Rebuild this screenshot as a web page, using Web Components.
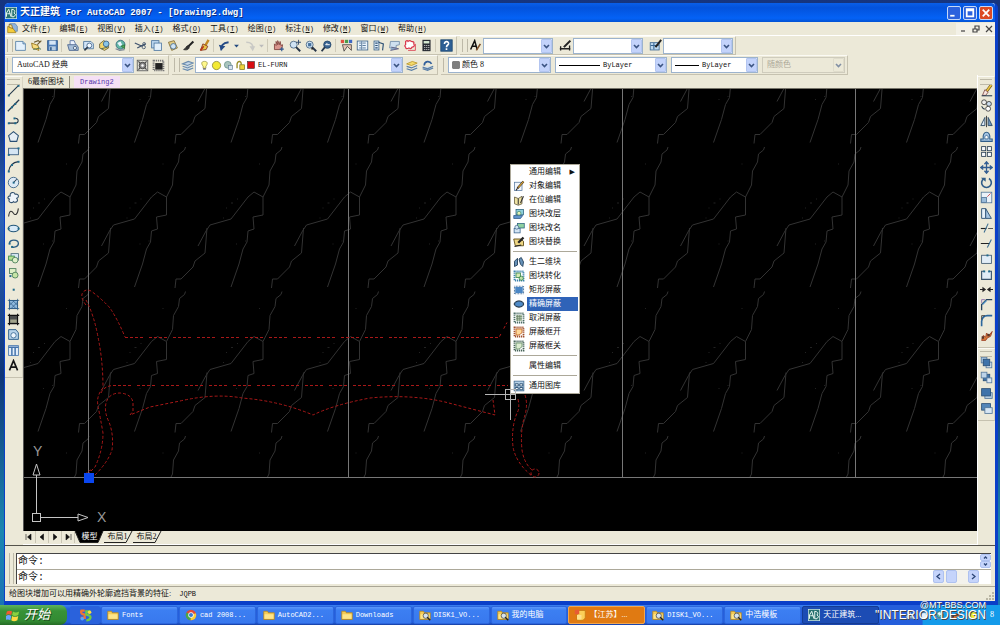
<!DOCTYPE html>
<html lang="zh-CN">
<head>
<meta charset="utf-8">
<title>天正建筑 For AutoCAD 2007</title>
<style>
html,body{margin:0;height:100%}
body{overflow:hidden;background:#0b43b0;font-family:"Liberation Serif","Noto Sans CJK SC",sans-serif;font-size:8px;line-height:12px;color:#111}
</style>
</head>
<body>
<cad-desktop></cad-desktop>
<script>
const BASE = `
*{box-sizing:border-box}
button,select,input{font:inherit;color:inherit;margin:0;padding:0;border:0;background:none;border-radius:0;outline:0}
svg{display:block}
.m{font-family:"Liberation Mono","Noto Sans CJK SC",monospace;font-size:7px}
`;
class Part extends HTMLElement {
  constructor() {
    super();
    const root = this.attachShadow({mode: 'open'});
    root.innerHTML = `<style>${BASE}${this.css()}</style>${this.html()}`;
  }
  css() { return ':host{display:block}'; }
  html() { return '<slot></slot>'; }
}

/* Icon artwork on a 16 x 16 grid */
const R = (x, y, w, h, f, s = 'none') => `<rect x="${x}" y="${y}" width="${w}" height="${h}" fill="${f}" stroke="${s}"/>`;
const P = (d, s = '#24384c', w = 1.3, f = 'none') => `<path d="${d}" stroke="${s}" stroke-width="${w}" fill="${f}"/>`;
const C = (x, y, r, f, s = 'none') => `<circle cx="${x}" cy="${y}" r="${r}" fill="${f}" stroke="${s}"/>`;
const dots = pts => pts.map(([x, y]) => R(x - 1, y - 1, 2.4, 2.4, '#1f6a8c')).join('');
const pencil = P('M14 2L6 11', '#3a2c20', 2.6) + P('M14 2L7 10', '#f0b83c', 1.4) + P('M6 11l-2 3', '#222', 1.5);
const lens = C(7, 7, 4.3, '#cfe3f4', '#42607e') + P('M10 10l5 5', '#27364a', 2.4);
const frameDots = c => `<rect x="2" y="2" width="12" height="12" fill="none" stroke="${c}" stroke-width="2.4" stroke-dasharray="1.6 1"/>`;
const folder = P('M1 3h5l1 2h8v9H1z', '#b58419', 1, '#f5cc55') + P('M2 7h12v6H2z', 'none', 0, '#fde58a');
const ICONS = {
  file: P('M2 3h9l3 3v8H2z', '#4f7ba3', 1, '#e4f1fc') + P('M11 3v3h3', '#4f7ba3', 1, '#b5d0ea'),
  open: P('M2 5l8 3 1 6-8-3z', '#8c6a14', 1, '#f8dd7d') + P('M9 7l5-5M5 4l5-2 3 2', '#6d5a2e', 1.4) + P('M4 13l8-2 1 2', '#3c6b46', 1),
  save: R(2, 2, 12, 12, '#4b7bb5', '#305a8b') + R(4, 2, 8, 5, '#d5e6f6') + R(4, 9, 8, 5, '#b5cce2') + R(5, 10, 2, 4, '#37618f'),
  print: P('M5 7V2h5l2 5', '#536fa0', 1, '#eef4ff') + P('M2 7h11l2 3v4H4z', '#445f8a', 1, '#a8bfd9') + C(11, 11, 2, '#e8eef6', '#3d5777'),
  preview: P('M2 3h9l3 3v6H2z', '#456f96', 1, '#d2e5f8') + C(9, 8, 3, '#f4fbff', '#3b5d82') + P('M7 10l-4 4', '#2d3a4a', 2),
  publish: P('M2 6l5-4 6 3v6l-5 3-6-3z', '#5f5a37', 1, '#f5d66a') + C(10, 6, 3.5, '#8ac5e7', '#376085') + P('M4 12l8-2', '#355', 1),
  web: C(8, 7, 5.5, '#62b6a4', '#31667d') + P('M4 5l4-2 2 4-3 2z', 'none', 0, '#eaf6ff') + P('M9 9l4-2v5z', '#2f6d38', 1, '#4bb055') + P('M2 12l5 2 6-1', '#7b8795', 1.5),
  cut: P('M1 5l9 4M4 11l10-5', '#40546e', 1.5) + C(12, 10, 2, 'none', '#40546e') + C(12.5, 6, 1.7, 'none', '#40546e'),
  copy: R(2, 2, 9, 9, '#bcd6ef', '#4a75a0') + R(5, 5, 9, 9, '#e3f0fb', '#4a75a0'),
  paste: P('M3 4l7-2 4 9-7 3z', '#806a32', 1, '#e4cd84') + C(9, 9, 3.4, '#cfe4f5', '#41698f'),
  match: P('M14 3L8 9', '#222', 2.4) + P('M8 8c-3 0-3 4-6 5 4 1 7 0 7-4', '#222', 1, '#333'),
  brush: P('M13 1L9 8', '#c48a22', 3) + P('M6 6l6 3-2 4-7 1z', '#7b2b1c', 1, '#e9c645') + P('M3 14l4-5', '#b8361e', 2),
  undo: P('M4 14c-1-6 2-9 9-10', '#244a86', 2.2) + P('M1 7l3 7 5-5z', 'none', 0, '#244a86'),
  redo: P('M12 12c1-5-2-8-8-8', '#c9c9c5', 2) + P('M8 9l4 6 3-6z', 'none', 0, '#c9c9c5'),
  down: P('M5 7h6l-3 3.5z', 'none', 0, '#234a7f'),
  downoff: P('M5 7h6l-3 3.5z', 'none', 0, '#bbb'),
  pan: P('M3 13V6l2 2V3l2 4V2l2 5 1-4 1 5 2-1-1 6z', '#7b3b36', 1, '#d9958d') + P('M12 10v5M9.500 12.500h5', '#315c93', 1.4),
  zoomrt: lens + P('M13 1v6M10 4h6', '#334e70', 1.2), zoomwin: lens + R(5, 5, 4, 4, '#47719d') + R(9, 11, 2, 2, '#222'),
  zoomprev: C(9, 7, 4.5, '#3a6491', '#24466b') + P('M6 10l-4 5', '#27364a', 2.2) + P('M7 7h5M7 7l2-2', '#fff', 1.2),
  props: R(1, 1, 4, 4, '#e15142') + R(6, 1, 4, 4, '#4c9b48') + R(11, 1, 4, 4, '#3e67c4') + P('M3 7h11v7l-5-5-4 6z', '#444', 1, '#e7c6b6'),
  dc: R(1.5, 2.5, 13, 11, '#eaf4fd', '#3d6288') + '<path d="M4 5h2M8 5h4M4 8h2M8 8h4M4 11h2M8 11h4M7 3v10" stroke="#3d6288"/>',
  palette: R(2.5, 2.5, 6, 11, '#dcebf8', '#3d6288') + P('M8 4l6 2-1 8M4 5h3M4 8h3M4 11h3', '#2f5276', 1.4),
  sheet: P('M3 3h11v4l-4 1v3H2z', '#6b87a5', 1, '#cfe0ef') + P('M4 10l9 2-10 2', '#668', 1.2, '#8aa9c8'),
  markup: P('M2 3q2-2 3 0 2-2 4 0 4 0 3 3 2 3-2 4-2 3-4 1-4 2-4-1-2-2 0-3z', '#d9364a', 1.5, '#fff') + P('M5 14h9V6', '#d9364a', 1),
  calc: R(3, 1, 10, 14, '#282c33') + R(4.5, 2.5, 7, 3, '#d7ebd3') + '<path d="M5 8h7M5 10.500h7M5 13h7" stroke="#ddd" stroke-dasharray="1.500 1"/>',
  help: R(1, 1, 14, 14, '#2d5f94', '#1b456f') + '<path d="M5.500 6c0-4 5.500-3.500 5 0-.3 1.500-2.500 1.500-2.500 4M8 11.500v2" stroke="#fff" stroke-width="2" fill="none"/>',
  textstyle: P('M2 13L7 2l3 11M4 9h5', '#111', 1.8) + P('M14 6l-5 8', '#80532e', 2),
  dimstyle: P('M1 12h13M2 9v5M13 8v6', '#222', 1.6) + P('M14 2L6 10', '#222', 2.6),
  tablestyle: R(1.5, 4.5, 11, 9, '#bdd8f0', '#386692') + P('M2 8h10M6 5v8', '#386692') + P('M15 1L8 10', '#222', 2.4),
  gear: R(1.5, 1.5, 13, 13, '#dcdcd4', '#555') + C(8, 8, 4, '#888', '#333') + C(8, 8, 1.5, '#fff') + P('M3 3l2 2M13 3l-2 2M3 13l2-2M13 13l-2-2', '#444'),
  wsave: frameDots('#777') + R(4, 5, 9, 8, '#222'),
  layers: P('M2 6l7-3 6 2-7 3zM2 9l6 2 7-3M2 12l6 2 7-3', '#6b8cae', 1.4, '#c6d9eb'),
  layprev: P('M2 6l7-3 6 2-7 3z', '#b89328', 1, '#f4da6a') + P('M2 9l6 2 7-3M2 12l6 2 7-3', '#5a7ea5', 1.5),
  layst: P('M4 8c0-6 7-6 9-2', '#315f9b', 2) + P('M2 10l6 2 7-3M2 12l6 2 7-3', '#5a7ea5', 1.5, '#c6d9eb'),
  bulb: P('M8 2c6 0 4 5 2 7v3H6V9C4 7 2 2 8 2z', '#8c8a35', 1, '#fff88c') + R(6, 12, 4, 2, '#667'),
  sun: C(8, 8, 6, '#f3e934', '#77772c'),
  snow: C(7, 7, 5, '#a9c4bd', '#5c8780') + R(8, 8, 6, 6, '#d4e2f0', '#65829c'),
  lock: R(7, 7, 7, 7, '#efd43c', '#7b731b') + P('M9 7c1-7-7-6-6 1v4', '#9b902a', 2),
  red: R(1, 1, 14, 14, '#d80d12', '#222'), gray: R(1.5, 1.5, 13, 13, '#7e7e7e', '#222'),
  line: P('M2 14L14 2') + dots([[2, 14], [14, 2]]), xline: P('M1 15L15 1', '#24384c', 1.6) + dots([[6, 10], [10, 6]]),
  pline: P('M2 10h8c5 0 5-6 0-6') + dots([[2, 10], [10, 10], [9, 4]]),
  polygon: P('M8 2l6 5-2 7H4L2 7z', '#294f74', 1.3, '#e6eef5'), rect: R(2, 4, 12, 8, '#d5e5f3', '#294f74') + dots([[2, 12], [14, 4]]),
  arc: P('M2 14C3 7 7 3 14 2') + dots([[2, 14], [6, 6], [14, 2]]),
  circle: C(8, 8, 6.4, '#dce9f5', '#2e587e') + P('M8 8l4-4') + dots([[8, 8]]),
  cloud: P('M4 6c-1-5 5-5 6-2 5-1 5 4 2 5 3 4-2 6-4 4-3 3-7 0-5-3-3-1-2-4 1-4z', '#31506e', 1.3, '#eef4fa'),
  spline: P('M2 13C3 4 6 6 8 9s5 2 6-6', '#333', 1.3), ellipse: '<ellipse cx="8" cy="8" rx="6.500" ry="4" fill="#d8eaf8" stroke="#215578" stroke-width="1.400"/>' + dots([[2, 8], [14, 8]]),
  earc: P('M3 8c0-6 11-5 11 0s-7 5-8 4', '#2b5c83', 1.6) + dots([[3, 8], [6, 12]]),
  insert: R(5, 2, 9, 8, '#d8e8f5', '#467') + R(2, 5, 7, 5, '#b6df93', '#384') + C(10, 10, 3.5, '#dff0c7', '#475'), block: R(3, 2, 8, 6, '#dff0c7', '#475') + C(10, 10, 3.6, '#c7e5a6', '#475') + dots([[4, 11]]),
  point: R(7, 7, 2.500, 2.500, '#1f6a8c'),
  hatch: R(3, 3, 10, 10, '#8fb9dd', '#2c5c87') + P('M1 3h14M1 13h14M3 1v14M13 1v14M3 9l6-6M5 13l8-8M3 5l8 8M7 3l6 6', '#2c5c87', .9),
  grad: R(3, 3, 10, 10, '#4b4d4d', '#111') + P('M1 3h14M1 13h14M3 1v14M13 1v14', '#111', 1.4) + P('M4 8h8v4H4z', 'none', 0, '#a2a48b'),
  region: P('M2 2h9l3 4v8H2z', '#34648f', 1.2, '#b7d3ea') + C(8, 9, 3.3, '#eef6fd', '#34648f'),
  table: R(2, 2, 12, 12, '#e4effa', '#4373ab') + P('M2 4h12M6 3v11M10 3v11', '#4373ab', 1.8), text: P('M3 14L8 2l5 12M5 10h6', '#151515', 2),
  erase: P('M14 1L8 9', '#6d5413', 3.4) + P('M14 1L8 9', '#ecc645', 2) + P('M6 7l4 3-3 4H3z', '#744', 1, '#f6e4dc') + P('M2 14.500h13'),
  copy2: C(5, 4, 3, '#eee', '#333') + C(11, 6, 3, '#cde', '#333') + C(10, 12, 3, '#fff', '#333') + P('M2 9q2 4 4 3'),
  mirror: P('M6 3L1 13h5z', '#37536d', 1.2, '#dfe9f2') + P('M10 3l5 10h-5z', '#37536d', 1.2, '#7097be') + P('M8 1v14', '#222', 1),
  offset: P('M1 14h14v-3h-3c2-11-10-11-8 0H1z', '#315d88', 1.300, '#a7c7e5') + P('M6 11c-1-6 5-6 4 0z', '#315d88', 1, '#fff'),
  array: [[2, 2], [9, 2], [2, 9], [9, 9]].map(([x, y]) => R(x, y, 5, 5, '#f6f8fa', '#22384d')).join(''),
  move: P('M8 1v14M1 8h14M5.500 4L8 1l2.500 3M5.500 12L8 15l2.500-3M4 5.500L1 8l3 2.500M12 5.500L15 8l-3 2.500', '#315d92', 1.6),
  rotate: P('M5 3a6 6 0 1 0 6 0', '#315d88', 2) + P('M1 2h6v5z', 'none', 0, '#315d88'),
  scale: R(1.500, 1.500, 13, 13, '#eaf2f9', '#527698') + R(2, 8, 6, 6, '#9cbddb', '#527698') + P('M9 7l4-4', '#c33', 1),
  stretch: P('M2 2h5v12H2z', '#36597b', 1.200, '#e9f2fa') + P('M7 2l7 12H7z', '#36597b', 1.2, '#a7c6e3'),
  trim: P('M1 8h7', '#222', 1.4) + P('M10 8h6', '#555', 1.2) + P('M5 13L10 2', '#36698e', 1.300), extend: P('M1 8h11', '#222', 1.3) + P('M9 13l5-10', '#36698e', 1.300),
  brk1: R(2, 4, 12, 10, '#e1edf7', '#39536c') + dots([[9, 4]]), brk2: P('M5 4H2v10h12V4h-3', '#39536c', 1.400, '#e1edf7') + dots([[5, 4], [11, 4]]),
  join: P('M0 8h6M10 8h6', '#222', 1.5) + P('M3 4.500L7.500 8 3 11.500zM13 4.500L8.500 8l4.500 3.500z', 'none', 0, '#222'), chamfer: P('M2 15V8l6-6h7', '#26435d', 1.6) + P('M2 6V2h4', '#86a', 1) + P('M3 8l5-5', '#4a8cc0', 1.6),
  fillet: P('M2 15V9Q3 2 9 2h6', '#2d679d', 2) + P('M2 7V2h4', '#333', 1),
  explode: P('M2 14l2-6 3 2 1-5 3 3 4-5-2 6-4 2-2 3z', '#96381c', 1, '#d97b3c') + R(2, 9, 3, 3, '#5a3528') + R(9, 6, 3, 3, '#5a3528'),
  front: R(1.5, 1.5, 7, 7, '#a9c6e1', '#55789b') + R(7.5, 7.5, 7, 7, '#dbe8f4', '#55789b') + R(4, 4, 8, 8, '#3e73aa', '#284d74'),
  back: R(4, 4, 8, 8, '#3e73aa', '#284d74') + R(1.5, 1.5, 7, 7, '#bcd3e8', '#55789b') + R(8.5, 8.5, 6, 6, '#dbe8f4', '#55789b'),
  above: R(6, 7, 9, 7, '#b8d0e6', '#4f7396') + R(2, 2, 11, 9, '#3e73aa', '#284d74'),
  under: R(2, 2, 11, 8, '#5386b8', '#284d74') + R(6, 7, 9, 7, '#d7e6f3', '#4f7396'),
  objedit: R(2, 3, 10, 11, '#f2f6fb', '#5678a0') + pencil, refedit: P('M2 4l5 2 5-3v10l-5 2-5-2z', '#5a5235', 1, '#efe3a3') + P('M7 6v8M14 3l-4 9', '#333', 1.4),
  blklayer: R(4, 2, 10, 7, '#8fd0db', '#27607c') + P('M1 10h12l-3 4H1z', '#2b5888', 1, '#5e93cc') + C(8, 7, 2.6, '#e4f2b4', '#487'),
  blkname: R(6, 2, 9, 6, '#8fd0a0', '#27607c') + R(1.5, 8.5, 8, 6, '#d5e6f5', '#34618c') + C(5, 7, 2.6, '#cfe7f5', '#468'),
  blkswap: P('M1 4h9l4 3v6H3z', '#604f1a', 1.2, '#efd784') + P('M14 2L7 9', '#222', 3) + P('M2 14l9-2', '#222', 1.6),
  to2d: P('M2 7l4-4v9l-4 2zM8 4l3-2 3 6-1 6-3-3z', '#24405a', 1.2, '#6792b9'), convert: frameDots('#3d83ad') + R(4, 4, 6, 6, '#d4eab4', '#2a7c42') + C(11, 11, 2.8, '#bfe0a8', '#2a7c42'),
  maskrect: R(3, 4, 10, 8, '#4b87c5') + '<rect x="2" y="3" width="12" height="10" fill="none" stroke="#2d5d8c" stroke-width="1.500" stroke-dasharray="1 1"/>',
  maskell: '<ellipse cx="8" cy="8" rx="6" ry="4" fill="#4f8bc8" stroke="#1b3650" stroke-width="1.300"/>' + '<path d="M1 8l7-5 7 5-7 5z" fill="none" stroke="#333" stroke-dasharray="1 1"/>',
  unmask: frameDots('#4d6e67') + R(4, 4, 8, 8, '#b3c8aa') + P('M4 6h8M4 9h8M6 4v8M9 4v8', '#647b65', .8), frameon: frameDots('#a0502d') + P('M4 4h8v5l-4 3H4z', '#c46b2b', 1.2, '#ffd99a'),
  frameoff: frameDots('#49665a') + P('M4 4h8v5l-4 3H4z', '#6f9770', 1.200, '#dcecd0'), lib: R(1.500, 1.500, 13, 13, '#b4d0e7', '#3d668c') + P('M3 5h4v3H3zM9 5h4v3H9zM3 10h4v3H3zM9 10h4v3H9z', '#274c70', 1.200, '#f3f8fc'),
  none: '', folder, search: folder + C(9, 9, 3.500, '#d6e3ee', '#444') + P('M11 11l4 4', '#222', 2),
  chrome: C(8, 8, 7, '#e14a38') + P('M8 8L2 4.500A7 7 0 0 0 7.500 15z', 'none', 0, '#43a850') + P('M8 8l-.5 7A7 7 0 0 0 14.500 5.500z', 'none', 0, '#f6cf3a') + C(8, 8, 3.600, '#fff') + C(8, 8, 2.700, '#3b79d2'),
  doc: P('M6 2h9v10l-3 3H4V8z', '#c07a12', 1, '#fbcf57') + R(1, 1, 6, 6, '#e75c34') + P('M4 8h6v6H4z', 'none', 0, '#ffe08a'),
  acad: R(.5, .5, 15, 15, '#27716f', '#cce7df') + P('M2 13V8l3-5 3 10M3 9h4M9 13V3q6 1 3 5 4 2 0 5z', '#eefaf5', 1.3),
  flag: P('M1 4q3-2 6 0L6 8Q3 6 0 8z', 'none', 0, '#f05a32') + P('M8 4q3 2 7 0l-1 4q-4 2-7 0z', 'none', 0, '#8ad13f') + P('M0 9q3-2 6 0l-1 5q-3-2-6 0z', 'none', 0, '#68a4ff') + P('M7 9q3 2 7 0l-1 5q-4 2-7 0z', 'none', 0, '#ffd940'),
  msn: P('M7 2H3q-2 4 4 5v4H2', '#f07336', 2.8) + P('M14 3H9v4q6 1 5 4-1 3-5 3', '#71c943', 2.8) + C(4, 12, 2.200, '#57a4ff') + C(13, 4, 2.200, '#ffda3e'),
  mdoc: P('M4 1h8l3 4v7H4z', '#4f7ba3', 1, '#8fb5de') + P('M1 5l7 2 5 7H1z', '#9b7917', 1, '#f4cc3a') + P('M3 2l4 1 1 5-5-2z', '#7c5b14', 1, '#fae48d')
};
const icon = (n, s = 13) => `<svg width="${s}" height="${s}" viewBox="0 0 16 16" aria-hidden="true">${ICONS[n]}</svg>`;

customElements.define('tool-button', class extends Part {
  css() { return ':host{display:flex;width:16px;min-height:12px}:host([narrow]){width:9px}button{display:flex;flex:1;align-items:center;justify-content:center;overflow:hidden}svg{flex:none}'; }
  html() { const n = this.getAttribute('icon'); return `<button type="button" aria-label="${n}">${icon(n)}</button>`; }
});
const tools = (s) => s.split(' ').map(n => n === '|' ? '<i></i>' : `<tool-button icon="${n}"${n.startsWith('down') ? ' narrow' : ''}></tool-button>`).join('');

customElements.define('cad-toolbar', class extends Part {
  css() { return `:host{display:flex;align-items:center;padding:0 2px 0 7px;position:relative;border-right:1px solid #c6c2b0;border-bottom:1px solid #c6c2b0;border-top:1px solid #fbfaf4;background:#ece9d8}
  :host::before{content:"";position:absolute;left:2px;top:2px;bottom:2px;width:4px;border-left:1px solid #bdb9a8;border-right:1px solid #bdb9a8}
  :host([vertical]){flex-direction:column;align-items:stretch;border-right:1px solid #d8d4c2;padding:6px 0 4px}
  :host([vertical])::before{left:2px;right:2px;top:2px;bottom:auto;width:auto;height:4px;border:0;border-top:1px solid #bdb9a8;border-bottom:1px solid #bdb9a8}
  ::slotted(i){width:1px;height:13px;background:#cfcbb9;margin:0 2px 0 1px}`; }
});

customElements.define('cad-combo', class extends Part {
  css() { return `:host{display:flex;position:relative;height:16px;width:var(--w,70px);margin-right:4px}
  select{appearance:none;width:100%;padding:0 13px 0 4px;border:1px solid #9cb3cd;background:#fff;font-size:8px;line-height:14px}
  .arrow{position:absolute;right:1px;top:1px;bottom:1px;width:11px;background:#c3d3fb;border:1px solid #b3c5f0;border-radius:1px;pointer-events:none}
  .arrow svg{width:100%;height:100%}
  .lead{position:absolute;left:4px;top:0;bottom:0;display:flex;align-items:center;gap:1px;pointer-events:none}
  .lead b{height:1px;background:#000;width:var(--rule,0)}
  select.m{font-size:7px}
  select:disabled{color:#aca899;background:#ece9d8;border-color:#cfccbd;opacity:1}
  select:disabled + .arrow{background:#ece9d8;border-color:#d8d4c4;opacity:.6}`; }
  html() {
    const a = n => this.getAttribute(n) || '';
    const lead = a('icons') ? a('icons').split(' ').map(n => icon(n, n === 'red' || n === 'gray' ? 8 : 11)).join('') : '';
    const pad = a('pad') || 4;
    return `<select aria-label="${a('label')}" class="${a('kind')}" style="padding-left:${pad}px" ${this.hasAttribute('off') ? 'disabled' : ''}><option>${a('value')}</option></select>
    <span class="arrow"><svg viewBox="0 0 9 12"><path d="M2 5l2.500 2.500L7 5" fill="none" stroke="#3b5482" stroke-width="1.600"/></svg></span><span class="lead">${lead}${a('rule') ? '<b></b>' : ''}</span>`;
  }
});

customElements.define('title-bar', class extends Part {
  css() { return `:host{display:flex;align-items:center;height:19px;padding:0 2px 0 0;border-radius:4px 4px 0 0;background:linear-gradient(#0a5fe8,#0352dc 25%,#0462f6 80%,#0353d4);color:#fff}
  h1{flex:1;margin:0 0 0 3px;font-size:10px;line-height:16px;font-weight:700;text-shadow:1px 1px #0a2f86;white-space:nowrap}
  h1 span{font-family:"Liberation Mono",monospace;font-size:9px;white-space:pre}
  button{width:14px;height:14px;margin-left:2px;border:1px solid #c7d8f7;border-radius:2px;background:#2c62dd}
  button.x{background:#dc4a24}`; }
  html() { const b = (l, d, c = '') => `<button type="button" class="${c}" aria-label="${l}"><svg width="12" height="12" viewBox="0 0 11 11"><path d="${d}" stroke="#fff" stroke-width="1.600" fill="none"/></svg></button>`;
    return `${icon('acad', 12)}<h1>天正建筑<span> For AutoCAD 2007 - [Drawing2.dwg]</span></h1>${b('最小化', 'M2 8h4')}${b('最大化', 'M2.500 2h6v6.500h-6zM2 3h7')}${b('关闭', 'M2.500 2.500l6 6M8.500 2.500l-6 6', 'x')}`; }
});

customElements.define('menu-bar', class extends Part {
  css() { return `:host{display:flex;align-items:center;height:14px;padding:0 0 0 2px;background:#ece9d8;border-bottom:1px solid #fff}
  nav{display:flex;gap:9px;flex:1;margin-left:4px}nav button{white-space:nowrap;line-height:12px}
  .w{width:13px;height:12px;display:flex;align-items:center;justify-content:center;background:#f3f1e7}`; }
  html() { const m = [['文件', 'F'], ['编辑', 'E'], ['视图', 'V'], ['插入', 'I'], ['格式', 'O'], ['工具', 'T'], ['绘图', 'D'], ['标注', 'N'], ['修改', 'M'], ['窗口', 'W'], ['帮助', 'H']];
    const w = (l, d) => `<button type="button" class="w" aria-label="${l}"><svg width="8" height="8" viewBox="0 0 8 8"><path d="${d}" stroke="#444" stroke-width="1.200" fill="none"/></svg></button>`;
    return `${icon('mdoc', 11)}<nav>${m.map(([t, k]) => `<button type="button">${t}<span class="m">(<u>${k}</u>)</span></button>`).join('')}</nav>${w('最小化', 'M2 6h4')}${w('还原', 'M1 4h4v3H1zM3 4V1h4v4H5')}${w('关闭', 'M1 1l6 6M7 1L1 7')}`; }
});

customElements.define('file-tabs', class extends Part {
  css() { return `:host{display:flex;align-items:flex-end;height:14px;background:#ece9d8;border-bottom:1px solid #77756a}
  button{height:12px;line-height:12px;padding:0 5px;border:1px solid #8d8a7c;border-width:0 1px 0 0;background:#ece9d8}
  button+button{margin-left:4px;padding:0 6px;border:0;background:#f5e0f5;color:#5535ac}`; }
  html() { return `<button type="button">6最新图块</button><button type="button" class="m">Drawing2</button>`; }
});

customElements.define('drawing-canvas', class extends Part {
  css() { return `:host{display:block;position:relative;flex:1;min-height:0;background:#000;overflow:hidden;border-left:1px solid #555}
  .view{position:absolute;inset:0;width:100%;height:100%}
  .cross{position:absolute;left:461px;top:299px;pointer-events:none}
  context-menu{position:absolute;left:486px;top:75px}
  text{font:14px "Liberation Sans",sans-serif;fill:#999}`; }
  html() {
    let veins = '';
    for (let r = -1; r < 3; r++) for (let c = -1; c < 20; c++) veins += `<use href="#vein" x="${c * 96.5}" y="${r * 144.5}"/>`;
    return `<svg class="view"><defs><clipPath id="floor"><rect x="0" y="0" width="2400" height="477"/></clipPath>
    <g id="vein" fill="none" stroke="#333"><path d="M89 147l-1 3-5 4-1 8-5 9-1 14-6 12v18l-10 2 1 12-6 2-1 11-4 7-4 15-8 23"/><path d="M70 197l-9-5-6 5-17 22-21 6-4 6-8 15"/><path d="M14 228l-2 25-10 8-2 6-12 12h-5l-1 9"/>
    <path d="M38 203h2M44 199h1M30 218h1M52 241h1M33 208h1M66 164h1M43 244h1" stroke="#222"/></g></defs>
    <g transform="translate(-24 -89)"><g clip-path="url(#floor)">${veins}</g>
    <path d="M88.500 89V477M348.500 89V477M622.500 89V477M855.500 89V477M0 477.500H2400" stroke="#777" fill="none"/>
    <g fill="none" stroke="#a81818" stroke-dasharray="3 2">
      <path d="M86 305q-5-6-4-11 3-6 9-3 11 8 19 17 8 12 15 29"/>
      <path d="M125 337.500H499l8-15M113 385.500H508" stroke-dasharray="3 2 3 2 3 2 3 6"/>
      <path d="M86 300q8 15 12 37 5 24 5 51-7 8-5 18 2 10 5 27 0 17-8 34l-8 8"/>
      <path d="M101 393q3-7 12-7.500"/>
      <path d="M95 475q13-13 17-25 2-15-3-28-5-10-3-19 3-10 14-10 12 1 13 10v8l-3 4 20-8 30-6q35-8 62-3 38 3 71 17 20-10 57-17 40-4 75 4l50 13-2-15"/>
      <path d="M525 395q3 9 0 20-5 15-3 35 2 13 10 20M518 399q2 10-1 14-6 15-4 34 3 16 19 29"/><circle cx="535" cy="473" r="4"/><path d="M87 475q-2-3 4-5"/>
    </g>
    <rect x="84" y="473" width="10" height="10" fill="#0a46f0"/>
    <g stroke="#c5c5c5" fill="none"><rect x="32.500" y="513.500" width="8" height="8"/><path d="M36.500 513V475M41 517.500H78M33 475h7l-3.500-11zM78 514l10 3.500-10 3.500z"/></g>
    <text x="33" y="456">Y</text><text x="97" y="522">X</text></g></svg>
    <context-menu></context-menu>
    <svg class="cross" width="34" height="34" fill="none" stroke="#b5b5b5"><path d="M0 6.500h31M25.500 1v31"/><rect x="20.500" y="1.500" width="10" height="10"/></svg>`;
  }
});

customElements.define('context-menu', class extends Part {
  css() { return `:host{display:block;width:70px;background:#fff;border:1px solid #aca899;color:#111}
  menu{list-style:none;margin:0;padding:0 1px}li{display:flex}
  button{display:flex;align-items:center;width:100%;height:14px;line-height:14px;text-align:left;position:relative}
  svg{width:12px;height:12px;margin:0 2px 0 1px}.t{flex:1;padding-left:2px}
  .on .t{background:#2f63b8;color:#fff}.more::after{content:"▶";font:7px "DejaVu Sans",sans-serif;position:absolute;right:3px;top:3px}
  hr{margin:2px 1px 3px;width:100%;border:0;border-top:1px solid #aca899}`; }
  html() {
    const rows = [['none', '通用编辑', 'more'], ['objedit', '对象编辑'], ['refedit', '在位编辑'], ['blklayer', '图块改层'], ['blkname', '图块改名'], ['blkswap', '图块替换'], 0,
      ['to2d', '生二维块'], ['convert', '图块转化'], ['maskrect', '矩形屏蔽'], ['maskell', '精确屏蔽', 'on'], ['unmask', '取消屏蔽'], ['frameon', '屏蔽框开'], ['frameoff', '屏蔽框关'], 0, ['none', '属性编辑'], 0, ['lib', '通用图库']];
    return `<menu>${rows.map(r => r ? `<li><button type="button" class="${r[2] || ''}">${icon(r[0], 12)}<span class="t">${r[1]}</span></button></li>` : '<li><hr></li>').join('')}</menu>`;
  }
});

customElements.define('layout-tabs', class extends Part {
  css() { return `:host{display:flex;align-items:flex-start;height:14px;background:#ece9d8;border-bottom:1px solid #fff}
  .n{width:13px;height:12px;display:flex;align-items:center;justify-content:center;border-right:1px solid #c9c5b4}
  .t{position:relative;height:12px;width:29px;line-height:12px;padding-right:2px;text-align:center}
  .t svg{position:absolute;inset:0}.t span{position:relative}.on{color:#fff;padding:0}`; }
  html() { const n = (l, d) => `<button class="n" type="button" aria-label="${l}"><svg width="8" height="8" viewBox="0 0 8 8"><path d="${d}" fill="#111" stroke="#111" stroke-width=".6"/></svg></button>`;
    const t = (s, on) => `<button type="button" class="t ${on ? 'on' : ''}"><svg width="29" height="12"><path d="${on ? 'M0 0L5 11.500H23L28 0' : 'M0 11.500H22L28 0'}" fill="${on ? '#000' : 'none'}" stroke="#222"/></svg><span>${s}</span></button>`;
    return n('第一个', 'M1 1v6M6 1v6L2.500 4z') + n('上一个', 'M5.500 1v6L2 4z') + n('下一个', 'M2.500 1v6L6 4z') + n('最后一个', 'M7 1v6M2 1v6l3.500-3z') + t('模型', 1) + t('布局1') + t('布局2'); }
});

customElements.define('command-window', class extends Part {
  css() { return `:host{display:flex;padding:7px 4px 2px 4px;background:#ece9d8;border-top:1px solid #55534b;border-bottom:1px solid #aaa695}
  .grip{width:5px;margin-right:2px;border-left:1px solid #bdb9a8;border-right:1px solid #bdb9a8}
  .box{flex:1;border:1px solid #444;border-width:1px 0 0 1px;background:#fff}
  .row{display:flex;height:15px;line-height:15px;padding-left:1px;font-family:"Liberation Mono","Noto Sans CJK SC",monospace;font-size:10px}
  .row+.row{border-top:1px solid #aca899}.row>p,.row>label{margin:0;flex:none}.row>p{flex:1}input{flex:1;min-width:0}
  .v{width:11px;display:flex;flex-direction:column}.h{display:flex;background:#f3f2ec;margin-right:12px;width:46px;justify-content:space-between}
  .v button,.h button{background:#c5d4fb;border:1px solid #aec1ef;border-radius:2px}.v button{height:7px}.h button{width:11px;height:13px}.h .g{margin-right:10px}`; }
  html() { const a = (l, d, c = '') => `<button type="button" class="${c}" aria-label="${l}"><svg width="9" height="${c === 'u' ? 5 : 11}" viewBox="0 0 9 ${c === 'u' ? 5 : 11}"><path d="${d}" fill="none" stroke="#2d4779" stroke-width="1.300"/></svg></button>`;
    return `<span class="grip"></span><div class="box"><div class="row"><p>命令:</p><div class="v">${a('向上', 'M3 3.500L4.500 2 6 3.500', 'u')}${a('向下', 'M3 1.500L4.500 3 6 1.500', 'u')}</div></div>
    <div class="row"><label for="c">命令:</label><input id="c" type="text"><div class="h">${a('向左', 'M6 3L3 5.500 6 8')}<button type="button" class="g" aria-label="滑块"></button>${a('向右', 'M3 3l3 2.500L3 8')}</div></div></div>`; }
});

customElements.define('status-line', class extends Part {
  css() { return ':host{display:flex;height:14px;line-height:14px;padding-left:4px;background:#ece9d8;position:relative}p{margin:0}span{margin-left:8px}svg{position:absolute;right:1px;bottom:1px}'; }
  html() { return '<p>给图块增加可以用精确外轮廓遮挡背景的特征:<span class="m">JQPB</span></p><svg width="8" height="8"><path d="M6 1h2M3 4h2M6 4h2M0 7h2M3 7h2M6 7h2" stroke="#a9a593" stroke-width="1.500"/></svg>'; }
});

customElements.define('task-bar', class extends Part {
  css() { return `:host{display:flex;height:20px;gap:1px;background:linear-gradient(#3a80f0,#245edb 20%,#2460df 85%,#1941a5);color:#fff;overflow:hidden}
  .start{flex:none;display:flex;align-items:center;gap:4px;width:67px;padding-left:6px;background:linear-gradient(#5eb45c,#379237 30%,#328a32 80%,#256b25);border-radius:0 7px 7px 0;font-size:13px;font-style:italic;text-shadow:1px 1px #1c4a1c;line-height:18px}
  .q{flex:none;width:30px;display:flex;align-items:center;justify-content:center;margin:1px 0 1px 2px;background:#2a62dc;border-radius:2px}
  .k{flex:1 1 0;min-width:0;max-width:90px;display:flex;align-items:center;gap:3px;padding-left:5px;margin:1px 0;background:linear-gradient(#5a97fb,#3c7ff2 20%,#3878ee);border:1px solid #2c66dd;border-radius:2px;white-space:nowrap}
  .k svg{flex:none}.k.hot{background:#e07a12;border-color:#f1a64f}.k.on{background:#1c4cb4;border-color:#153c94}
  .tray{flex:none;width:120px;display:flex;align-items:center;justify-content:flex-end;gap:6px;padding-right:6px;background:linear-gradient(90deg,#245edb 35%,#149bea 36%)}`; }
  html() {
    const k = [['folder', 'Fonts', 1], ['chrome', 'cad 2008...', 1], ['folder', 'AutoCAD2...', 1], ['folder', 'Downloads', 1], ['search', 'DISK1_VO...', 1], ['search', '我的电脑'], ['doc', '【江苏】...', 0, 'hot'], ['search', 'DISK1_VO...', 1], ['search', '中浩模板'], ['acad', '天正建筑...', 0, 'on']];
    return `<button type="button" class="start">${icon('flag', 14)}开始</button><button type="button" class="q" aria-label="MSN">${icon('msn', 13)}</button>
    ${k.map(([i, t, m, c]) => `<button type="button" class="k ${c || ''}">${icon(i, 12)}<span class="${m ? 'm' : ''}">${t}</span></button>`).join('')}
    <div class="tray">${icon('print', 10)}${icon('file', 9)}${icon('web', 10)}${icon('explode', 10)}${icon('sun', 11)}<span></span><span>8</span></div>`;
  }
});

customElements.define('cad-desktop', class extends Part {
  css() { return `:host{display:flex;flex-direction:column;height:100vh;position:relative;background:linear-gradient(180deg,#16357f,#0d2c70 15%,#2c62b8 35%,#0e3578 60%,#1c86b0 85%,#1a6fb5)}
  main{flex:1;min-height:0;margin:3px 2px 0 4px;border:solid #0a3fc8;border-width:0 3px 4px 1px;display:flex;flex-direction:column;background:#ece9d8;border-radius:5px 5px 0 0}
  .bar{display:flex;gap:3px;height:20px}.bar>*{flex:none}.first{height:19px}
  .work{flex:1;min-height:0;display:flex}.mid{flex:1;min-width:0;display:flex;flex-direction:column}
  .side{flex:none;width:18px;padding-top:1px}.right{border-left:1px solid #fff}
  .stack{display:flex;flex-direction:column}.stack tool-button{flex:1 1 0}
  .n19{height:290px}.n17{height:260px}.n4{height:61px}
  .mark{position:absolute;right:14px;bottom:3px;text-align:right;color:#fff;font-family:"Liberation Sans",sans-serif;font-size:12px;line-height:13px;text-shadow:1px 1px #444;pointer-events:none}
  .mark p{margin:0}.mark .s{font-size:9px;line-height:8px}`; }
  html() { return `<main><title-bar></title-bar><menu-bar></menu-bar>
  <div class="bar first"><cad-toolbar>${tools('file open save | print preview publish web | cut copy paste match brush | undo down redo downoff | pan zoomrt zoomwin zoomprev | props dc palette sheet markup calc | help')}</cad-toolbar>
  <cad-toolbar>${tools('textstyle')}<cad-combo label="文字样式"></cad-combo>${tools('dimstyle')}<cad-combo label="标注样式"></cad-combo>${tools('tablestyle')}<cad-combo label="表格样式" style="margin-right:0"></cad-combo></cad-toolbar></div>
  <div class="bar"><cad-toolbar><cad-combo label="工作空间" value="AutoCAD 经典" style="--w:122px;margin-right:0"></cad-combo>${tools('gear wsave')}</cad-toolbar>
  <cad-toolbar>${tools('layers')}<cad-combo label="图层" icons="bulb sun snow lock red" value="EL-FURN" kind="m" pad="62" style="--w:208px;margin-right:0"></cad-combo>${tools('layprev layst')}</cad-toolbar>
  <cad-toolbar><cad-combo label="颜色" icons="gray" value="颜色 8" kind="" pad="13" style="--w:103px"></cad-combo><cad-combo label="线型" value="ByLayer" kind="m" rule="1" pad="47" style="--w:112px;--rule:41px"></cad-combo><cad-combo label="线宽" value="ByLayer" kind="m" rule="1" pad="30" style="--w:87px;--rule:24px"></cad-combo><cad-combo label="打印样式" value="随颜色" off style="--w:83px;margin-right:0"></cad-combo></cad-toolbar></div>
  <div class="work"><div class="side"><cad-toolbar vertical><div class="stack n19">${tools('line xline pline polygon rect arc circle cloud spline ellipse earc insert block point hatch grad region table text')}</div></cad-toolbar></div>
  <div class="mid"><file-tabs></file-tabs><drawing-canvas></drawing-canvas><layout-tabs></layout-tabs></div>
  <div class="side right"><cad-toolbar vertical><div class="stack n17">${tools('erase copy2 mirror offset array move rotate scale stretch trim extend brk1 brk2 join chamfer fillet explode')}</div></cad-toolbar><cad-toolbar vertical><div class="stack n4">${tools('front back above under')}</div></cad-toolbar></div></div>
  <command-window></command-window><status-line></status-line></main>
  <task-bar></task-bar><div class="mark"><p class="s">@MT-BBS.COM</p><p>"INTERIOR DESIGN</p></div>`; }
});
</script>
</body>
</html>
